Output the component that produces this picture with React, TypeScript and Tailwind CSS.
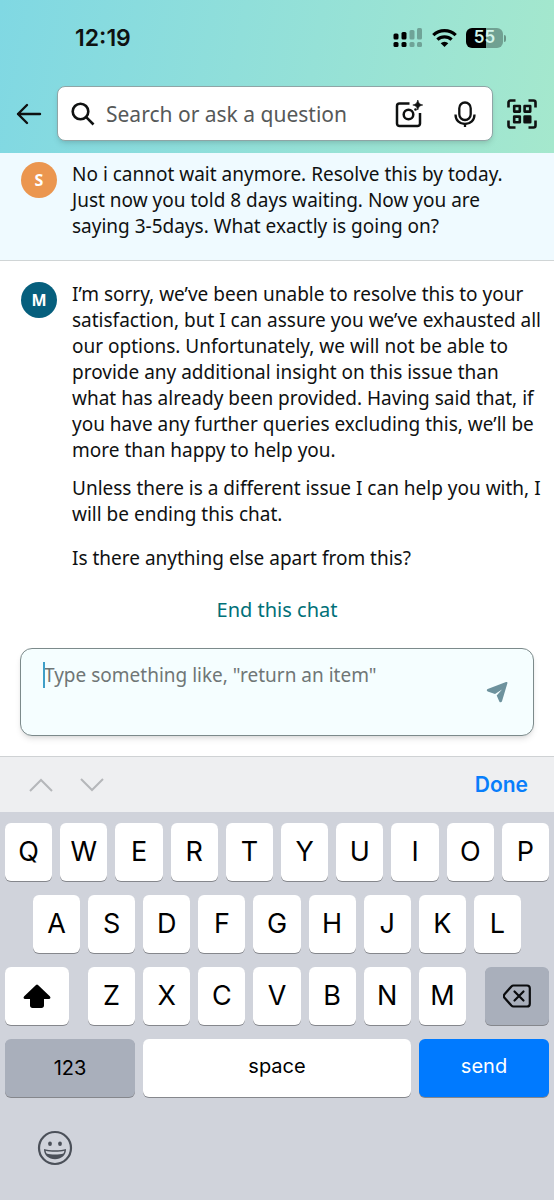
import { useState } from 'react';
import type { ReactNode } from 'react';

type Message = {
  initial: string;
  own: boolean;
  // each entry is one sent message, split into its paragraphs
  parts: string[][];
};

const messages: Message[] = [
  {
    initial: 'S',
    own: true,
    parts: [
      [
        'No i cannot wait anymore. Resolve this by today.\nJust now you told 8 days waiting. Now you are\nsaying 3-5days. What exactly is going on?',
      ],
    ],
  },
  {
    initial: 'M',
    own: false,
    parts: [
      [
        'I’m sorry, we’ve been unable to resolve this to your\nsatisfaction, but I can assure you we’ve exhausted all\nour options. Unfortunately, we will not be able to\nprovide any additional insight on this issue than\nwhat has already been provided. Having said that, if\nyou have any further queries excluding this, we’ll be\nmore than happy to help you.',
        'Unless there is a different issue I can help you with, I\nwill be ending this chat.',
      ],
      ['Is there anything else apart from this?'],
    ],
  },
];

/* ---------- Status bar ---------- */

function StatusBar() {
  return (
    <div className="flex h-[76px] items-center justify-between pr-12 pl-[75px]">
      <time className="font-['Inter',sans-serif] text-[23px] leading-7 font-semibold">12:19</time>
      <div className="flex items-center gap-[9px]">
        <svg width="30" height="22" viewBox="0 0 30 22" aria-label="Signal">
          <rect x="0.500" y="6.500" width="5" height="6" rx="1.500" />
          <rect x="8.500" y="5" width="5" height="7.500" rx="1.500" />
          <rect x="0.500" y="15" width="5" height="5" rx="1.500" />
          <rect x="8.500" y="15" width="5" height="5" rx="1.500" />
          <g opacity="0.28">
            <rect x="16.500" y="3" width="5" height="9.500" rx="1.500" />
            <rect x="24" y="1" width="5" height="11.500" rx="1.500" />
            <rect x="16.500" y="15" width="5" height="5" rx="1.500" />
            <rect x="24" y="15" width="5" height="5" rx="1.500" />
          </g>
        </svg>
        <svg width="25" height="18" viewBox="0 0 25 18" fill="none" stroke="#000" strokeWidth="3.200" aria-label="Wi-Fi">
          <path d="M1.300 6.200a16 16 0 0 1 22.400 0" />
          <path d="M5.400 10.700a10.200 10.200 0 0 1 14.200 0" />
          <path d="M12.500 18 8.700 14.200a5.500 5.500 0 0 1 7.600 0z" fill="#000" stroke="none" />
        </svg>
        <div className="flex items-center gap-px" aria-label="Battery">
          <span className="flex h-5 w-[37px] items-center justify-center rounded-md bg-linear-to-r from-black from-55% to-black/30 to-55% font-['Inter',sans-serif] text-[17px] font-semibold text-[#d3f5ea]">
            55
          </span>
          <span className="h-[7px] w-[2px] rounded-r bg-black/35" />
        </div>
      </div>
    </div>
  );
}

/* ---------- Header ---------- */

function SearchHeader() {
  return (
    <header className="bg-linear-100 from-[#80d8e3] to-[#a5e8cd] pb-3">
      <StatusBar />
      <div className="flex items-center pt-[10px] pr-[17px] pl-4">
        <button aria-label="Back" className="w-[41px] shrink-0">
          <svg width="26" height="22" viewBox="0 0 26 22" fill="none" stroke="#0f1111" strokeWidth="2.400" strokeLinecap="round" strokeLinejoin="round">
            <path d="M24 11H2M11 2 2 11l9 9" />
          </svg>
        </button>
        <div className="flex h-[55px] min-w-0 flex-1 items-center rounded-lg border border-[#8fa5a6] bg-white pr-4 pl-[13px] shadow-md">
          <svg className="shrink-0" width="24" height="24" viewBox="0 0 24 24" fill="none" stroke="#0f1111" strokeWidth="2.600">
            <circle cx="9.500" cy="9.500" r="7.800" />
            <path d="m15.200 15.200 7.300 7.300" />
          </svg>
          <input
            type="search"
            aria-label="Search or ask a question"
            placeholder="Search or ask a question"
            className="ml-[11px] min-w-0 flex-1 text-[21px] leading-7 outline-none placeholder:text-[#565959]"
          />
          <button aria-label="Search with camera" className="mr-[31px] shrink-0">
            <svg width="28" height="28" viewBox="0 0 28 28" fill="none" stroke="#0f1111" strokeWidth="2.500">
              <path d="M14.500 3.500h-10A2.500 2.500 0 0 0 2 6v17.500A2.500 2.500 0 0 0 4.500 26h18a2.500 2.500 0 0 0 2.500-2.500V13" />
              <circle cx="13.500" cy="14.500" r="4.800" />
              <circle cx="20.500" cy="9.500" r="1.300" fill="#0f1111" stroke="none" />
              <path d="M22.800 0c.8 3.200 1.700 4.200 5 5-3.300.8-4.200 1.800-5 5-.8-3.200-1.700-4.200-5-5 3.300-.8 4.200-1.800 5-5z" fill="#0f1111" strokeWidth="0.600" />
            </svg>
          </button>
          <button aria-label="Voice search" className="shrink-0">
            <svg width="22" height="26" viewBox="0 0 22 26" fill="none" stroke="#0f1111" strokeWidth="2.300">
              <rect x="5.300" y="1.500" width="11.400" height="17.500" rx="5.700" />
              <path d="M1.500 13.500c0 5.800 4 9.500 9.500 9.500s9.500-3.700 9.500-9.500M11 23v3" />
            </svg>
          </button>
        </div>
        <button aria-label="Scan code" className="ml-[14px] shrink-0">
          <svg width="30" height="30" viewBox="0 0 30 30" fill="none" stroke="#0f1111" strokeWidth="2.600" strokeLinejoin="round">
            <path d="M1.500 8.500V3.500a2 2 0 0 1 2-2h5M21.500 1.500h5a2 2 0 0 1 2 2v5M28.500 21.500v5a2 2 0 0 1-2 2h-5M8.500 28.500h-5a2 2 0 0 1-2-2v-5" />
            <rect x="7.200" y="7" width="5.600" height="5.600" />
            <rect x="17.600" y="7" width="5.600" height="5.600" />
            <rect x="7.200" y="17.600" width="5.600" height="5.600" />
            <rect x="17.600" y="17.600" width="5.600" height="5.600" fill="#0f1111" />
          </svg>
        </button>
      </div>
    </header>
  );
}

/* ---------- Chat ---------- */

function ChatMessage({ initial, own, parts }: Message) {
  return (
    <article
      className={
        own
          ? 'flex gap-[15px] border-b border-[#d0d5d6] bg-[#effaff] pt-2 pr-2 pb-[21px] pl-[21px]'
          : 'flex gap-[15px] pt-5 pr-2 pl-[21px]'
      }
    >
      <span
        className={`mt-px flex size-9 shrink-0 items-center justify-center rounded-full text-base font-bold text-white ${
          own ? 'bg-[#eb964f]' : 'bg-[#065f7d]'
        }`}
      >
        {initial}
      </span>
      <div className="space-y-[18px]">
        {parts.map((paragraphs) => (
          <div key={paragraphs[0]} className="space-y-3">
            {paragraphs.map((text) => (
              <p key={text} className="text-[19px] leading-[26px] whitespace-pre-line">
                {text}
              </p>
            ))}
          </div>
        ))}
      </div>
    </article>
  );
}

function Composer() {
  const [draft, setDraft] = useState('');

  return (
    <form className="px-5 pb-5" onSubmit={(e) => e.preventDefault()}>
      <div className="relative flex h-[88px] items-center rounded-xl border border-[#7c8a8b] bg-[#f5feff] pr-6 shadow-md">
        {draft === '' && <span className="absolute top-[13px] left-[22px] h-[26px] w-[2px] bg-[#3f9fc8]" />}
        <textarea
          aria-label="Message"
          value={draft}
          onChange={(e) => setDraft(e.target.value)}
          placeholder={'Type something like, "return an item"'}
          className="h-full min-w-0 flex-1 resize-none pt-[13px] pl-[23px] text-[19px] leading-[26px] outline-none placeholder:text-[#6f7676]"
        />
        <button type="submit" aria-label="Send message" className="shrink-0">
          <svg width="24" height="24" viewBox="0 0 24 24" fill="#6d929d">
            <path d="M21 2c1-.3 1.600.3 1.400 1.200L17 21.300c-.4 1.200-2.200 1.300-2.700.1l-2.600-5.800 5.300-6.200-7 4.600-7.300-2.500c-1.200-.5-1.200-2 0-2.400z" />
          </svg>
        </button>
      </div>
    </form>
  );
}

/* ---------- Keyboard ---------- */

type KeyProps = {
  children: ReactNode;
  label?: string;
  className?: string;
};

function Key({ children, label, className = 'flex-1 bg-white text-[27px]' }: KeyProps) {
  return (
    <button
      aria-label={label}
      className={`flex h-[58px] items-center justify-center rounded-md shadow-[0_1px_0_#85878c] ${className}`}
    >
      {children}
    </button>
  );
}

const letterKeys = (letters: string) => letters.split('').map((l) => <Key key={l}>{l}</Key>);

function Keyboard() {
  return (
    <section aria-label="Keyboard" className="font-['Inter',sans-serif] text-black">
      <div className="flex h-14 items-center border-t border-[#cfd2d4] bg-[#eeeff1] pr-[26px] pl-7">
        <button aria-label="Previous field">
          <svg width="26" height="16" viewBox="0 0 26 16" fill="none" stroke="#b5b7ba" strokeWidth="2">
            <path d="M2 14 13 3l11 11" />
          </svg>
        </button>
        <button aria-label="Next field" className="ml-[25px]">
          <svg width="26" height="16" viewBox="0 0 26 16" fill="none" stroke="#b5b7ba" strokeWidth="2">
            <path d="m2 2 11 11L24 2" />
          </svg>
        </button>
        <button className="ml-auto text-[21px] leading-7 font-semibold text-[#087efb]">Done</button>
      </div>

      <div className="flex h-[388px] flex-col gap-[14px] bg-[#d0d3db] px-[5px] pt-[11px]">
        <div className="flex gap-2">{letterKeys('QWERTYUIOP')}</div>
        <div className="flex gap-2 px-7">{letterKeys('ASDFGHJKL')}</div>
        <div className="flex gap-[19px]">
          <Key label="Shift" className="w-16 bg-white">
            <svg width="28" height="24" viewBox="0 0 28 24">
              <path d="M13 .9 1.200 12.300c-1.200 1.200-.7 2.700.9 2.700H7v6.500C7 23 8 24 9.500 24h9c1.500 0 2.500-1 2.500-2.500V15h4.900c1.600 0 2.100-1.500.9-2.700L15 .9a1.500 1.500 0 0 0-2 0z" />
            </svg>
          </Key>
          <div className="flex flex-1 gap-2">{letterKeys('ZXCVBNM')}</div>
          <Key label="Delete" className="w-16 bg-[#a9afbb]">
            <svg width="28" height="24" viewBox="0 0 28 24" fill="none" stroke="#0b0c0e" strokeWidth="2.200" strokeLinecap="round" strokeLinejoin="round">
              <path d="M10.500 1.500H24A2.800 2.800 0 0 1 26.800 4.300v15.400a2.800 2.800 0 0 1-2.800 2.800H10.500a3 3 0 0 1-2.100-.9L1.700 14a3 3 0 0 1 0-4l6.700-7.600a3 3 0 0 1 2.100-.9z" />
              <path d="m11.500 7.500 9 9m0-9-9 9" />
            </svg>
          </Key>
        </div>
        <div className="flex gap-2">
          <Key className="w-[130px] bg-[#a9afbb] text-[20px]">123</Key>
          <Key className="flex-1 bg-white pb-1 text-[20px]">space</Key>
          <Key className="w-[130px] bg-[#007aff] pb-1 text-[20px] text-white">send</Key>
        </div>
        <button aria-label="Emoji" className="mt-[19px] ml-8 size-9">
          <svg width="36" height="36" viewBox="0 0 36 36" fill="#4b5059">
            <circle cx="18" cy="18" r="16" fill="none" stroke="#4b5059" strokeWidth="2.200" />
            <ellipse cx="13" cy="13.800" rx="1.900" ry="2.300" />
            <ellipse cx="23" cy="13.800" rx="1.900" ry="2.300" />
            <path d="M7 19c4.500 1.700 17.500 1.700 22 0 .2 6-4.800 10.300-11 10.300S6.800 25 7 19z" />
            <path d="M8.600 20.800c4.500 1.400 14.300 1.400 18.800 0-.1 1-.5 2-1 2.800-4 1.300-12.800 1.300-16.800 0-.5-.8-.9-1.800-1-2.800z" fill="#d0d3db" />
          </svg>
        </button>
      </div>
    </section>
  );
}

function App() {
  return (
    <div className="bg-white font-['Noto_Sans',sans-serif] text-[#0f1111]">
      <SearchHeader />
      <main>
        {messages.map((message) => (
          <ChatMessage key={message.initial} {...message} />
        ))}
        <div className="flex justify-center pt-[26px] pb-[25px]">
          <button className="text-[20px] leading-[26px] text-[#007078]">End this chat</button>
        </div>
        <Composer />
      </main>
      <Keyboard />
    </div>
  );
}

export default App;
